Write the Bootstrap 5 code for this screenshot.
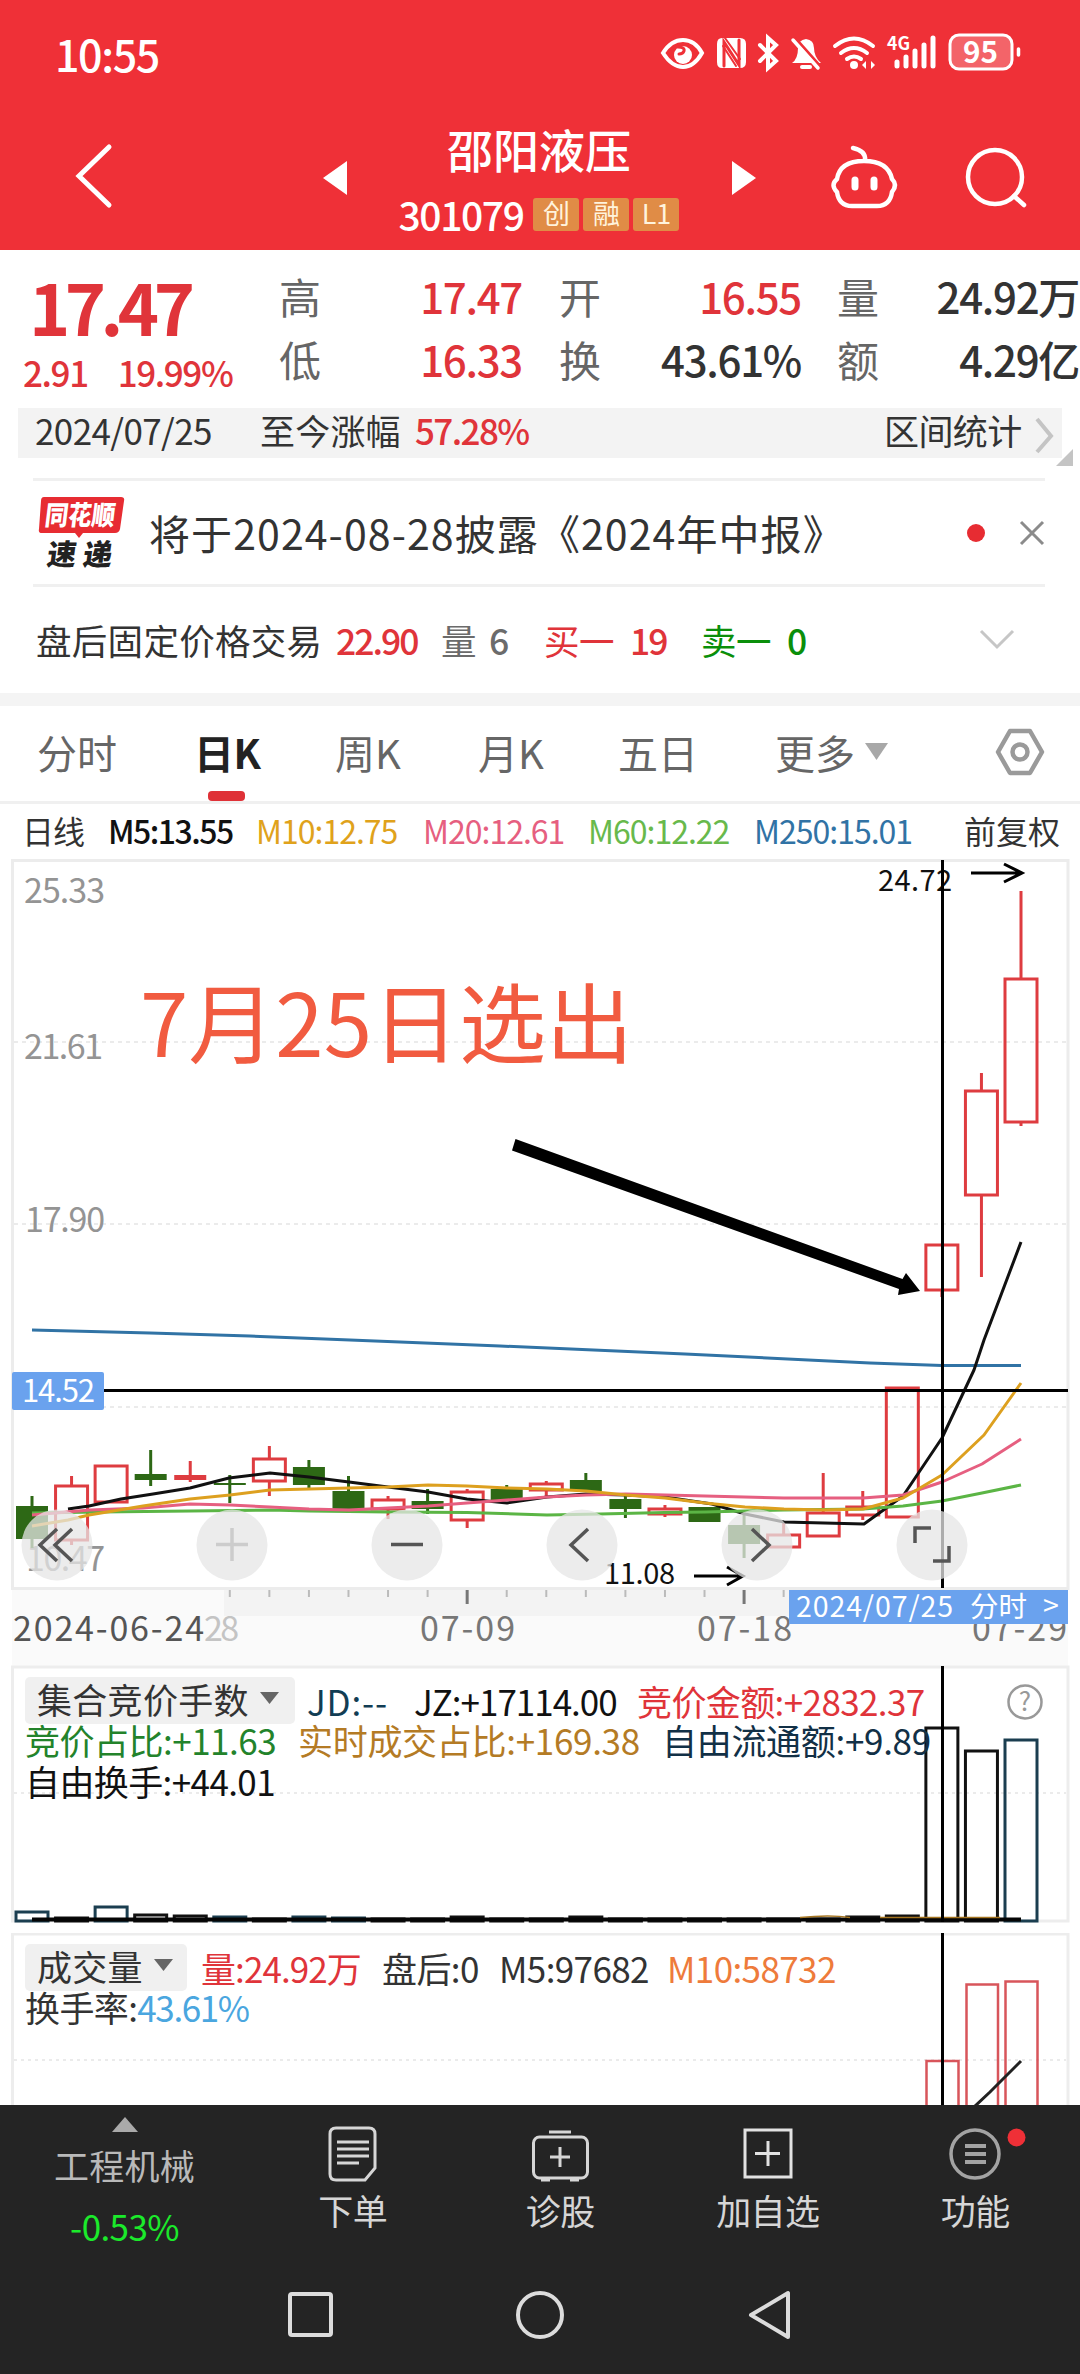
<!DOCTYPE html>
<html lang="zh-CN">
<head>
<meta charset="utf-8">
<meta name="viewport" content="width=device-width, initial-scale=1">
<title>邵阳液压 301079</title>
<link href="https://cdn.jsdelivr.net/npm/bootstrap@5.3.0/dist/css/bootstrap.min.css" rel="stylesheet">
<style>
body{width:1080px;height:2374px;overflow:hidden;margin:0;background:#fff;color:#333;font-family:"Noto Sans CJK SC","Noto Sans",sans-serif;font-size:35px;line-height:1;letter-spacing:-.6px}
svg{display:block;flex:none;overflow:visible}
svg text{letter-spacing:0}
.track{display:grid;align-items:center;white-space:nowrap}
.up{color:#e0343a}.down{color:#0a8f0a}.mute{color:#6b6b6b}
.medium{font-weight:500}
.topbar{background:#ef3037;height:250px;color:#fff}
.status{height:110px;padding:1px 59px 5px 55px}
.clock{font-size:43px;font-weight:500;letter-spacing:-1.4px}
.titlebar{height:140px;grid-template-columns:300px 80px 318px 82px 300px}
.stockname{font-size:46px;font-weight:500;height:77px;line-height:54px;padding-top:11px;letter-spacing:0}
.stockcode{font-size:39px;font-weight:500;letter-spacing:-1.4px;margin-right:6px}
.tagbox{background:#e08c46;border-radius:3px;width:46px;height:33px;font-size:27px;line-height:29px;letter-spacing:0;text-align:center;color:#fff3dc}
.quote{height:158px;grid-template-columns:279px 801px}
.bigprice{font-size:70px;font-weight:700;letter-spacing:-5.5px;line-height:64px;padding-left:29px;padding-top:24px}
.delta{padding-left:23px;gap:30px;height:43px;margin-top:12px;font-size:35px;letter-spacing:-1.4px}
.cells{grid-template-columns:120px 123px 37px 80px 162px 36px 60px 182px;grid-template-rows:63px 63px;font-size:42px;padding-top:14px;letter-spacing:-1.3px}
.cells .lab{color:#666;font-weight:400}
.sumbar{background:#f3f3f3;margin:0 18px;height:50px;grid-template-rows:42px;grid-template-columns:17px 225px 156px 468px 149px 25px;font-size:35px}
.growth{margin-left:-156px}
.growth>:first-child{width:155px;letter-spacing:.2px}
.news{margin:20px 35px 0 33px;height:109px;border-top:3px solid #f0f0f0;border-bottom:3px solid #f0f0f0;grid-template-columns:116px 817px 53px 30px;font-size:41px;letter-spacing:1.1px}
.after{height:106px;padding:0 0 0 36px;grid-template-columns:300px 105px 48px 55px 86px 71px 86px 192px 40px;font-size:35.5px}
.sep{height:13px;background:#f4f4f4}
.tabs{height:98px;padding:0 0 4px 37px;border-bottom:3px solid #f0f0f0;grid-template-columns:157px 141px 143px 140px 157px 90px 131px 50px;font-size:40px;color:#666;position:relative;margin:0;letter-spacing:0}
.tabs .on{color:#222;font-weight:700;letter-spacing:-.6px}
.tabline{position:absolute;left:208px;bottom:0;width:37px;height:10px;border-radius:4px;background:#df3137}
.ma{height:55px;padding:0 0 3px 22px;grid-template-columns:86px 148px 167px 165px 166px 210px 110px;font-size:32px;letter-spacing:-1px}
.panel{position:relative}
.panel>svg{position:absolute;left:0;top:0}
.legend{position:relative;padding:11px 0 0 25px}
.l1{grid-template-columns:282px 107px 223px 380px 40px;height:45px}
.l2{grid-template-columns:273px 364px 300px;height:40px;padding-bottom:5px}
.l3{height:41px;padding-bottom:5px}
.v1{grid-template-columns:176px 181px 117px 168px 180px;height:45px}
.pill{background:#f0f0f0;border-radius:5px;height:47px;padding:0 12px 5px 12px;gap:11px;letter-spacing:.3px}
.dock{background:#242424;height:269px;color:#d6d6d6}
.dockgrid{display:grid;grid-template-columns:249px repeat(4,207.5px);height:157px;font-size:35px}
.dockgrid>div{display:flex;flex-direction:column;align-items:center}
.dockgrid>div>span{margin-top:10px}
.syskeys{height:106px;grid-template-columns:288px 228px 233px 60px}
</style>
</head>
<body>
<header class="topbar">
  <div class="status d-flex justify-content-between align-items-center">
    <span class="clock">10:55</span>
    <svg width="362" height="42" viewBox="660 33 362 42" fill="none" stroke="#fff" stroke-width="4" stroke-linecap="round">
      <path d="M664 54Q672 41 684 41T703 54Q695 68 684 68T664 54Z"/><circle cx="684" cy="56" r="9" fill="#fff" stroke="none"/><path d="M679 48q7 0 6 4-1 3-5 3" stroke="#ef3037" stroke-width="3"/>
      <path d="M723 39h18q6 0 6 6v18q0 6-6 6h-18q-5 0-5-6V45q0-6 5-6Z" fill="#fff" stroke="none"/><path d="M725 67V43l15 23V41" stroke="#ef3037" stroke-width="3"/><path d="M726 39l15 21M724 47l13 20" stroke="#ef3037" stroke-width="2"/>
      <path d="M761 46l16 16-8 7V39l8 7-16 16"/>
      <path d="M793 64q6-4 6-15 0-8 8-9 8 1 8 9 0 9 7 15Z" fill="#fff" stroke="none"/><path d="M803 68h8"/><path d="M797 40l24 27" stroke="#ef3037" stroke-width="3"/><path d="M794 41l25 28" stroke-width="3.500"/>
      <path d="M836 47q19-15 38 0M842 54q13-10 26 0M848 60q7-5 14 0"/><circle cx="855" cy="66" r="4" fill="#fff" stroke="none"/><path d="M863 66l4-4v8ZM876 66l-4-4v8Z" fill="#fff" stroke="none"/>
      <path d="M898 63v4M907 58v9M916 52v15M925 46v21M934 39v28" stroke-width="5"/>
      <text x="888" y="51" font-size="18" font-weight="700" fill="#fff" stroke="none" textLength="23" lengthAdjust="spacingAndGlyphs">4G</text>
      <rect x="951" y="36" width="62" height="34" rx="9" fill="#fff" fill-opacity=".25" stroke-width="3"/><path d="M1019.500 50v6" stroke-width="3.500"/>
      <text x="964" y="64" font-size="30" font-weight="700" fill="#fff" stroke="none" textLength="35" lengthAdjust="spacingAndGlyphs">95</text>
    </svg>
  </div>
  <div class="titlebar track">
    <svg width="300" height="140" viewBox="0 110 300 140" fill="none" stroke="#fff" stroke-width="5" stroke-linecap="round"><path d="M109 147L79 176l30 29"/></svg>
    <svg width="80" height="140" viewBox="300 110 80 140" fill="#fff"><path d="M323 178l24-17v34Z"/></svg>
    <div class="text-center align-self-start">
      <div class="stockname">邵阳液压</div>
      <div class="d-flex justify-content-center align-items-center gap-1 mt-1 pt-1"><span class="stockcode">301079</span><span class="tagbox">创</span><span class="tagbox">融</span><span class="tagbox">L1</span></div>
    </div>
    <svg width="82" height="140" viewBox="698 110 82 140" fill="#fff"><path d="M756 178l-24-17v34Z"/></svg>
    <svg width="300" height="140" viewBox="780 110 300 140" fill="none" stroke="#fff" stroke-width="4.500" stroke-linecap="round">
      <path d="M864 161q-24 0-27 18-7 6 0 13 2 14 15 14h25q13 0 15-14 6-7 0-13-4-18-28-18ZM865 160q1-9-12-12"/><path d="M855 180v7M874 180v7" stroke-width="7"/>
      <circle cx="995" cy="177" r="27"/><path d="M1014 196l10 9"/>
    </svg>
  </div>
</header>

<section class="quote track">
  <div class="align-self-start up"><div class="bigprice">17.47</div><div class="delta medium d-flex align-items-center"><span>2.91</span><span>19.99%</span></div></div>
  <div class="cells track medium align-self-start">
    <span class="lab">高</span><span class="up text-end">17.47</span><span></span><span class="lab">开</span><span class="up text-end">16.55</span><span></span><span class="lab">量</span><span class="text-end">24.92万</span>
    <span class="lab">低</span><span class="up text-end">16.33</span><span></span><span class="lab">换</span><span class="text-end">43.61%</span><span></span><span class="lab">额</span><span class="text-end">4.29亿</span>
  </div>
</section>

<section class="sumbar track">
  <span></span><span>2024/07/25</span><span></span><span class="growth d-flex"><span>至今涨幅</span><span class="up medium" style="letter-spacing:-1.6px">57.28%</span></span><span>区间统计</span>
  <svg width="40" height="42" viewBox="1030 408 40 42" fill="none"><path d="M1034 419l14 17-14 16" stroke="#c4c4c4" stroke-width="4"/><path d="M1070 449v17h-17Z" fill="#c4c4c4"/></svg>
</section>

<section class="news track">
  <svg width="100" height="80" viewBox="33 493 100 80">
    <path d="M44 497h77q4 0 3 4l-4 28q-1 4-5 4H83l-4 5-4-5H42q-4 0-3-4l2-28q0-4 3-4Z" fill="#e72c32"/>
    <text transform="translate(44 525) skewX(-7)" font-size="27" font-weight="900" fill="#fff" textLength="70" lengthAdjust="spacingAndGlyphs">同花顺</text>
    <text transform="translate(46 565) skewX(-8)" font-size="29" font-weight="900" fill="#222" textLength="65">速递</text>
  </svg>
  <span>将于2024-08-28披露《2024年中报》</span>
  <svg width="20" height="20" viewBox="0 0 20 20"><circle cx="10" cy="10" r="9" fill="#e72c32"/></svg>
  <svg width="26" height="26" viewBox="0 0 26 26" stroke="#8b8b8b" stroke-width="3"><path d="M2 2l22 22M24 2L2 24"/></svg>
</section>

<section class="after track">
  <span style="letter-spacing:.3px">盘后固定价格交易</span><span class="up medium" style="letter-spacing:-2px">22.90</span><span class="mute">量</span><span class="mute medium">6</span><span class="up">买一</span><span class="up medium" style="letter-spacing:-2px">19</span><span class="down">卖一</span><span class="down medium">0</span>
  <svg width="36" height="22" viewBox="0 0 36 22" fill="none" stroke="#c6c6c6" stroke-width="3"><path d="M2 2l16 16L34 2"/></svg>
</section>
<div class="sep"></div>

<nav class="tabs track">
  <span>分时</span><span class="on">日K</span><span>周K</span><span>月K</span><span>五日</span><span>更多</span>
  <svg width="23" height="17" viewBox="0 0 23 17" fill="#a8a8a8"><path d="M0 0h23L11.500 17Z"/></svg>
  <svg width="50" height="50" viewBox="0 0 50 50" fill="none" stroke="#9a9a9a" stroke-width="4.500" stroke-linejoin="round"><path d="M14 4h20l12 21-12 21H14L2 25Z"/><circle cx="24" cy="25" r="7.500"/></svg>
  <span class="tabline"></span>
</nav>

<div class="ma track">
  <span>日线</span><span class="medium" style="color:#111;letter-spacing:-1.5px">M5:13.55</span><span style="color:#e0a21b">M10:12.75</span><span style="color:#e65f80">M20:12.61</span><span style="color:#68b94c">M60:12.22</span><span style="color:#3173a5">M250:15.01</span><span style="letter-spacing:0">前复权</span>
</div>

<svg id="kline" width="1080" height="807" viewBox="0 859 1080 807" fill="none">
  <path d="M12 1590h1056v76H12Z" fill="#fafafa"/><path d="M224 1590h844v26H224Z" fill="#f3f3f3"/>
  <path d="M12.500 1588.500V860.500H1068v728Z" stroke="#ececec" stroke-width="3"/>
  <path d="M14 1042h1054M14 1224h1054M14 1407h1054" stroke="#ebebeb" stroke-width="2" stroke-dasharray="4 4"/>
  <g fill="#949494" font-size="34">
    <text x="24" y="903" textLength="81">25.33</text><text x="24" y="1059" textLength="79">21.61</text><text x="25" y="1232" textLength="80">17.90</text><text x="26" y="1571" textLength="79">10.47</text>
  </g>
  <g id="ticks" stroke="#bbb" stroke-width="2"></g>
  <g font-size="34" fill="#777">
    <text x="204" y="1641" fill="#c4c4c4" textLength="35">28</text><text x="13" y="1641" fill="#555" textLength="191">2024-06-24</text>
    <text x="420" y="1641" textLength="95">07-09</text><text x="697" y="1641" textLength="95">07-18</text><text x="972" y="1641" textLength="95">07-29</text>
  </g>
  <g id="candles"></g>
  <g stroke-width="3" stroke-linejoin="round">
    <path stroke="#3173a5" d="M32 1330L150 1333 250 1336 350 1340 500 1346 685 1354 870 1363 942 1365.500 1021 1365.500"/>
    <path stroke="#111" d="M68 1509L89 1506 121 1499 153 1494 190 1488 229 1478 270 1473 309 1477 349 1482 388 1487 428 1492 467 1499 507 1503 547 1497 586 1494 626 1495 665 1497 712 1504 745 1514 784 1522 864 1524 903 1496 942 1438 974 1370 984 1340 1021 1242"/>
    <path stroke="#5bb545" d="M32 1513L100 1512 190 1511 270 1510 309 1511 388 1512 467 1512.500 547 1515 600 1514 665 1512.500 705 1512 784 1510 863 1509 903 1506 942 1501 982 1493 1021 1485"/>
    <path stroke="#e65f80" d="M32 1515L90 1510 143 1508 190 1504 230 1505 270 1507 309 1509 349 1510 388 1508 428 1506 467 1503 507 1500 547 1497 586 1495 626 1494 705 1496 784 1498 863 1498 903 1495 942 1482 982 1464 1021 1439"/>
    <path stroke="#dda01f" d="M32 1526L68 1520 89 1515 143 1506 190 1499 230 1495 270 1490 349 1488 388 1487 428 1485 467 1486 507 1488 547 1489 586 1491 626 1495 665 1498 705 1503 745 1507 784 1509 824 1510 863 1509 903 1498 942 1475 984 1435 1021 1383"/>
  </g>
  <g fill="#111" font-size="29"><text x="878" y="891" textLength="74">24.72</text><text x="604" y="1584" textLength="71">11.08</text></g>
  <path d="M971 873h51M1004 864l18 9-18 9M694 1576h49M727 1567l16 9-16 9" stroke="#000" stroke-width="3"/>
  <path d="M942.500 860v728M104 1390.500h964" stroke="#000" stroke-width="3"/>
  <path d="M515.500 1139L902.500 1279 906 1273 920 1291 898 1295 899 1289 512 1150.500Z" fill="#000"/>
  <text x="140" y="1057" font-size="87" fill="#f15b40" textLength="493">7月25日选出</text>
  <rect x="12" y="1372" width="92" height="38" rx="2" fill="#6aa2ee"/><text x="22" y="1402" font-size="31" fill="#fff" textLength="73">14.52</text>
  <g fill="#e6e6e6" fill-opacity=".75"><circle cx="57" cy="1545" r="35.500"/><circle cx="232" cy="1545" r="35.500"/><circle cx="407" cy="1545" r="35.500"/><circle cx="582" cy="1545" r="35.500"/><circle cx="757" cy="1545" r="35.500"/><circle cx="932" cy="1545" r="35.500"/></g>
  <g stroke="#555" stroke-width="3.500"><path d="M57 1529l-17 16 17 16M72 1529l-17 16 17 16M391 1544.500h32M588 1529l-17 16 17 16M752 1529l17 16-17 16M915 1543v-15h16M949 1546v15h-16"/><path d="M216 1544.500h32M232 1528v33" stroke="#ccc"/></g>
  <rect x="789" y="1590" width="279" height="34" fill="#6aa2ee"/>
  <g fill="#fff" font-size="28.500"><text x="796" y="1617" textLength="157">2024/07/25</text><text x="970" y="1617" textLength="57">分时</text><text x="1043" y="1616" textLength="16">&gt;</text></g>
</svg>

<section class="panel" style="height:267px">
  <svg width="1080" height="267" viewBox="0 1666 1080 267" fill="none">
    <path d="M12.500 1921V1667H1068v254Z" stroke="#ededed" stroke-width="3"/>
    <path d="M14 1793h1052" stroke="#ebebeb" stroke-width="2" stroke-dasharray="3 4"/>
    <g id="bids" stroke-width="3"></g>
    <path d="M32 1919.500h989" stroke="#050505" stroke-width="4"/><path d="M800 1917.500q30-3 50 0M880 1917.500h120" stroke="#a57521" stroke-width="1.500"/>
    <path d="M942.500 1666v256" stroke="#000" stroke-width="3"/>
  </svg>
  <div class="legend">
    <div class="l1 track">
      <span class="pill d-inline-flex align-items-center" style="width:270px">集合竞价手数<svg width="19" height="12" viewBox="0 0 19 12" fill="#666"><path d="M0 0h19L9.500 12Z"/></svg></span>
      <span style="color:#123d54;letter-spacing:.8px">JD:--</span><span style="color:#111;letter-spacing:-1px">JZ:+17114.00</span><span class="up">竞价金额:+2832.37</span>
      <svg width="38" height="38" viewBox="0 0 38 38" style="margin-left:-11px"><circle cx="19" cy="20" r="16.500" fill="none" stroke="#999" stroke-width="2.500"/><text x="19" y="29" text-anchor="middle" font-size="26" fill="#999">?</text></svg>
    </div>
    <div class="l2 track"><span style="color:#23832b;letter-spacing:-.5px">竞价占比:+11.63</span><span style="color:#b47b25;letter-spacing:-.3px">实时成交占比:+169.38</span><span style="color:#123046;letter-spacing:-.3px">自由流通额:+9.89</span></div>
    <div class="l3 track"><span style="color:#111">自由换手:+44.01</span></div>
  </div>
</section>

<section class="panel overflow-hidden" style="height:172px">
  <svg width="1080" height="172" viewBox="0 1933 1080 172" fill="none">
    <path d="M12.500 2110V1934H1068v176" stroke="#ededed" stroke-width="3"/>
    <path d="M14 2060h1052" stroke="#ebebeb" stroke-width="2" stroke-dasharray="3 4"/>
    <path d="M926.500 2110v-49H958.500v49M966.500 2110V1984.500H998v126M1005.500 2110V1981.500H1037.500v129" stroke="#d8555b" stroke-width="2.500"/>
    <path d="M974 2107L990 2092 1021 2061" stroke="#222" stroke-width="3"/><path d="M942.500 1933v172" stroke="#000" stroke-width="3"/>
  </svg>
  <div class="legend">
    <div class="v1 track">
      <span class="pill d-inline-flex align-items-center" style="width:162px">成交量<svg width="19" height="12" viewBox="0 0 19 12" fill="#666"><path d="M0 0h19L9.500 12Z"/></svg></span>
      <span class="up" style="letter-spacing:-.9px">量:24.92万</span><span>盘后:0</span><span>M5:97682</span><span style="color:#ee7b3b">M10:58732</span>
    </div>
    <div class="l2 d-flex align-items-center"><span>换手率:<span style="color:#4aa6df;letter-spacing:-1.4px">43.61%</span></span></div>
  </div>
</section>

<footer class="dock">
  <div class="dockgrid">
    <div><svg width="26" height="15" viewBox="0 0 26 15" fill="#aaa" style="margin-top:12px"><path d="M13 0l13 15H0Z"/></svg><span style="margin-top:15px;color:#b9b9b9;letter-spacing:.2px">工程机械</span><span style="margin-top:26px;color:#1bea2b">-0.53%</span></div>
    <div><svg width="60" height="60" viewBox="323 2122 60 60" fill="none" stroke="#d6d6d6" stroke-width="3" style="margin-top:17px"><path d="M336 2128h33q6 0 6 6v34l-10 12h-29q-6 0-6-6v-40q0-6 6-6ZM337 2142h32M337 2149h32M337 2156h32M337 2163h22"/></svg><span>下单</span></div>
    <div><svg width="60" height="60" viewBox="530 2122 60 60" fill="none" stroke="#d6d6d6" stroke-width="3" style="margin-top:17px"><rect x="533.500" y="2137" width="54" height="41" rx="6"/><path d="M549 2132h22M560 2147v20M550 2157h20M541 2180h9M570 2180h9"/></svg><span>诊股</span></div>
    <div><svg width="60" height="60" viewBox="738 2122 60 60" fill="none" stroke="#e2e2e2" stroke-width="3" style="margin-top:17px"><path d="M745 2130h46v47h-46ZM768 2141v25M755 2153.500h25"/></svg><span>加自选</span></div>
    <div><svg width="60" height="60" viewBox="945 2122 60 60" fill="none" stroke="#a3a3a3" stroke-width="3.500" style="margin-top:17px"><circle cx="975" cy="2154" r="24"/><path d="M965 2146h21M965 2154h21M965 2162h21" stroke-width="4"/><circle cx="1016.500" cy="2137.500" r="9" fill="#ef3037" stroke="none"/></svg><span>功能</span></div>
  </div>
  <div class="syskeys track">
    <span></span>
    <svg width="46" height="46" viewBox="0 0 46 46" fill="none" stroke="#dcdcdc" stroke-width="4"><rect x="2" y="2" width="41" height="41" rx="2"/></svg>
    <svg width="48" height="48" viewBox="0 0 48 48" fill="none" stroke="#dcdcdc" stroke-width="4"><circle cx="24" cy="24" r="22"/></svg>
    <svg width="44" height="50" viewBox="0 0 44 50" fill="none" stroke="#dcdcdc" stroke-width="4" stroke-linejoin="round"><path d="M39 3v44L2 25Z"/></svg>
  </div>
</footer>

<script src="https://cdn.jsdelivr.net/npm/bootstrap@5.3.0/dist/js/bootstrap.bundle.min.js"></script>
<script>
// kind (g: falling, r: rising, f: rising with a filled body), body top, body bottom, high, low
const days = [
  ['g',1506,1539,1496,1548],['r',1486,1540,1476,1545],['r',1466,1502,1465,1503],['g',1474,1480,1450,1486],['f',1475,1480,1461,1482],
  ['g',1483,1485,1475,1503],['r',1459,1481,1446,1496],['g',1467,1485,1460,1488],['g',1491,1509,1476,1509],['r',1500,1509,1496,1519],
  ['g',1501,1509,1489,1514],['r',1492,1520,1489,1528],['g',1489,1500,1485,1500],['r',1484,1490,1481,1497],['g',1480,1491,1473,1491],
  ['g',1499,1509,1496,1518],['r',1509,1514,1505,1517],['g',1507,1522,1507,1522],['g',1525,1544,1512,1558],['r',1535,1547,1522,1547],
  ['r',1513,1536,1473,1536],['r',1507,1515,1491,1520],['r',1388,1517,1388,1517],['r',1245,1290,1245,1297],['r',1091,1195,1073,1277],['r',979,1122,891,1126]
];
const bids = [1912,1918,1907,1915,1916,1917,1919,1917,1918,1919,1919,1917,1919,1919,1917,1919,1919,1919,1919,1919,1919,1917,1916,1728,1751,1740];
let candles = '', ticks = '', bars = '';
days.forEach(([kind, top, bottom, high, low], i) => {
  const x = 32 + 39.56 * i, color = kind === 'g' ? '#2d6815' : '#de3c40';
  candles += `<path d="M${x} ${high}V${top}M${x} ${bottom}V${low}" stroke="${color}" stroke-width="3"/>`;
  candles += kind === 'r'
    ? `<rect x="${x - 16}" y="${top}" width="32" height="${bottom - top}" stroke="${color}" stroke-width="3"/>`
    : `<rect x="${x - 16}" y="${top}" width="32" height="${bottom - top}" fill="${color}"/>`;
  if (i > 4 && i < 20) {
    const major = i === 11 || i === 18;
    ticks += `<path d="M${x} 1590V${major ? 1604 : 1597}"${major ? ' stroke="#777" stroke-width="3"' : ''}/>`;
  }
  const dark = [0, 2, 5, 7, 8, 25].includes(i) ? '#1b3e50' : '#111';
  bars += `<rect x="${x - 16}" y="${bids[i]}" width="32" height="${1921 - bids[i]}" stroke="${dark}"/>`;
});
document.getElementById('candles').innerHTML = candles;
document.getElementById('ticks').innerHTML = ticks;
document.getElementById('bids').innerHTML = bars;
</script>
</body>
</html>
